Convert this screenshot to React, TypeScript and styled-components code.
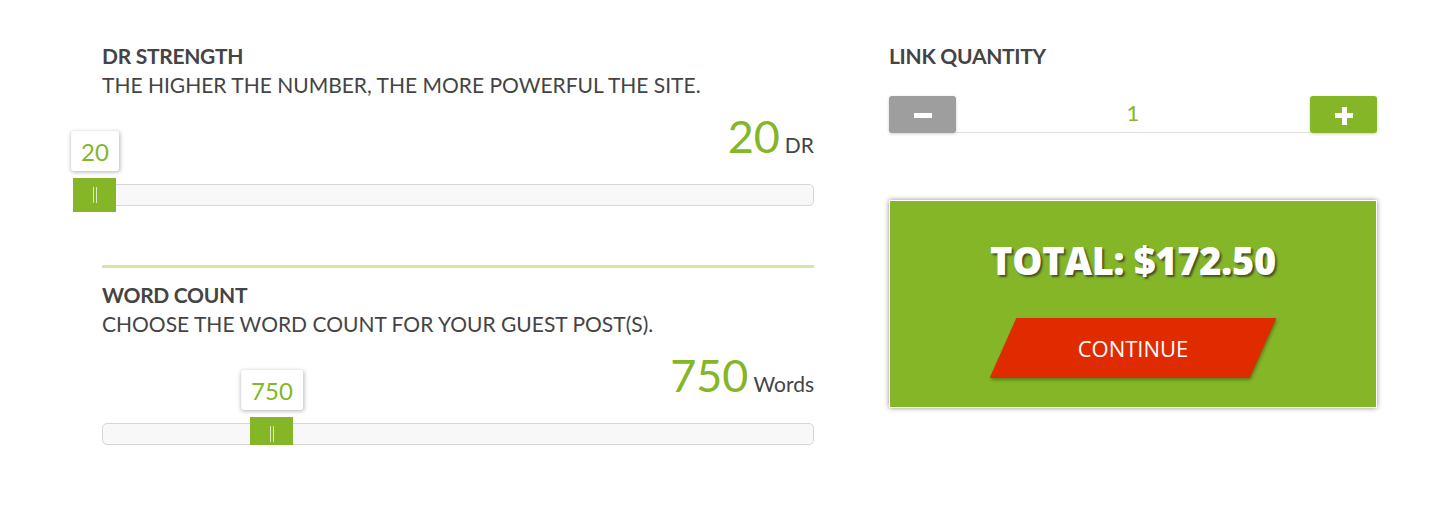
import styled, { createGlobalStyle } from "styled-components";

const GREEN = "#84b627";
const TEXT = "#444444";

const GlobalStyle = createGlobalStyle`
  html, body {
    margin: 0;
    padding: 0;
    background: #ffffff;
  }
  body {
    font-family: Lato, "Open Sans", sans-serif;
    color: ${TEXT};
  }
`;

const Page = styled.div`
  display: flex;
  align-items: flex-start;
  gap: 75px;
  padding: 42px 0 0 102px;
`;

const LeftColumn = styled.div`
  width: 712px;
  display: flex;
  flex-direction: column;
`;

const RightColumn = styled.div`
  width: 488px;
  display: flex;
  flex-direction: column;
`;

const Section = styled.section`
  display: flex;
  flex-direction: column;
`;

const Title = styled.h3`
  margin: 0;
  font-size: 21px;
  line-height: 28px;
  font-weight: 700;
  letter-spacing: -0.3px;
  color: ${TEXT};
`;

const Subtitle = styled.p`
  margin: 0;
  font-size: 21px;
  line-height: 30px;
  font-weight: 400;
  color: ${TEXT};
`;

const ValueRow = styled.div`
  display: flex;
  justify-content: flex-end;
  align-items: baseline;
  gap: 5px;
  height: 56px;
  margin-top: 8px;
`;

const BigValue = styled.span`
  font-size: 45px;
  line-height: 56px;
  color: ${GREEN};
`;

const Unit = styled.span`
  font-size: 21px;
  color: ${TEXT};
`;

const Track = styled.div`
  position: relative;
  height: 22px;
  margin-top: 20px;
  box-sizing: border-box;
  border: 1px solid #d6d6d6;
  border-radius: 5px;
  background: #f8f8f8;
`;

const Handle = styled.div`
  position: absolute;
  top: -7px;
  width: 43px;
  height: 34px;
  margin-left: -22px;
  background: ${GREEN};
  display: flex;
  justify-content: center;
  align-items: center;
  gap: 2px;

  &::before,
  &::after {
    content: "";
    width: 1px;
    height: 16px;
    background: rgba(255, 255, 255, 0.7);
  }
`;

const Tip = styled.div`
  position: absolute;
  bottom: 34px;
  transform: translateX(-50%);
  height: 40px;
  padding: 0 10px;
  box-sizing: border-box;
  display: flex;
  align-items: center;
  background: #ffffff;
  border-radius: 3px;
  box-shadow: 0 1px 4px rgba(0, 0, 0, 0.3);
  font-size: 24px;
  color: ${GREEN};
`;

const Divider = styled.hr`
  margin: 59px 0 13px;
  border: 0;
  height: 3px;
  background: #d3e8a8;
`;

const Stepper = styled.div`
  display: flex;
  align-items: stretch;
  height: 37px;
  margin-top: 26px;
`;

const StepButton = styled.button<{ $plus?: boolean }>`
  position: relative;
  width: 67px;
  border: 0;
  border-radius: 3px;
  padding: 0;
  background: ${(p) => (p.$plus ? GREEN : "#9e9e9e")};
  box-shadow: 0 1px 3px rgba(0, 0, 0, 0.2);
  cursor: pointer;

  &::before {
    content: "";
    position: absolute;
    left: 50%;
    top: 50%;
    width: 18px;
    height: 5px;
    margin: -2px 0 0 -9px;
    background: #ffffff;
  }

  &::after {
    content: "";
    display: ${(p) => (p.$plus ? "block" : "none")};
    position: absolute;
    left: 50%;
    top: 50%;
    width: 5px;
    height: 18px;
    margin: -8px 0 0 -2px;
    background: #ffffff;
  }
`;

const QtyInput = styled.div`
  flex: 1;
  display: flex;
  justify-content: center;
  align-items: center;
  padding-bottom: 4px;
  border-bottom: 1px solid #dddddd;
  font-size: 22px;
  color: ${GREEN};
`;

const TotalBox = styled.div`
  margin-top: 67px;
  height: 208px;
  box-sizing: border-box;
  border: 1px solid #ffffff;
  background: ${GREEN};
  box-shadow: 0 0 5px rgba(0, 0, 0, 0.45);
  display: flex;
  flex-direction: column;
  align-items: center;
  padding-top: 36px;
`;

const Total = styled.div`
  font-family: "Open Sans", sans-serif;
  font-weight: 800;
  font-size: 38px;
  line-height: 46px;
  letter-spacing: -0.3px;
  color: #ffffff;
  text-shadow: 2px 2px 2px rgba(40, 40, 40, 0.7);
`;

const ContinueButton = styled.button`
  margin-top: 35px;
  width: 260px;
  height: 60px;
  border: 0;
  padding: 0;
  background: #e02b00;
  transform: skewX(-24deg);
  box-shadow: 2px 2px 3px rgba(0, 0, 0, 0.3);
  cursor: pointer;

  span {
    display: block;
    transform: skewX(24deg);
    font-family: "Open Sans", sans-serif;
    font-size: 22px;
    color: #ffffff;
  }
`;

type SliderProps = {
  title: string;
  subtitle: string;
  value: string;
  unit: string;
  offset: number;
};

const SliderBlock = ({ title, subtitle, value, unit, offset }: SliderProps) => (
  <Section>
    <Title>{title}</Title>
    <Subtitle>{subtitle}</Subtitle>
    <ValueRow>
      <BigValue>{value}</BigValue>
      <Unit>{unit}</Unit>
    </ValueRow>
    <Track>
      <Tip style={{ left: offset }}>{value}</Tip>
      <Handle style={{ left: offset }} />
    </Track>
  </Section>
);

const App = () => (
  <>
    <GlobalStyle />
    <Page>
      <LeftColumn>
        <SliderBlock
          title="DR STRENGTH"
          subtitle="THE HIGHER THE NUMBER, THE MORE POWERFUL THE SITE."
          value="20"
          unit="DR"
          offset={-8}
        />
        <Divider />
        <SliderBlock
          title="WORD COUNT"
          subtitle="CHOOSE THE WORD COUNT FOR YOUR GUEST POST(S)."
          value="750"
          unit="Words"
          offset={169}
        />
      </LeftColumn>
      <RightColumn>
        <Title>LINK QUANTITY</Title>
        <Stepper>
          <StepButton aria-label="decrease" />
          <QtyInput>1</QtyInput>
          <StepButton $plus aria-label="increase" />
        </Stepper>
        <TotalBox>
          <Total>TOTAL: $172.50</Total>
          <ContinueButton>
            <span>CONTINUE</span>
          </ContinueButton>
        </TotalBox>
      </RightColumn>
    </Page>
  </>
);

export default App;
